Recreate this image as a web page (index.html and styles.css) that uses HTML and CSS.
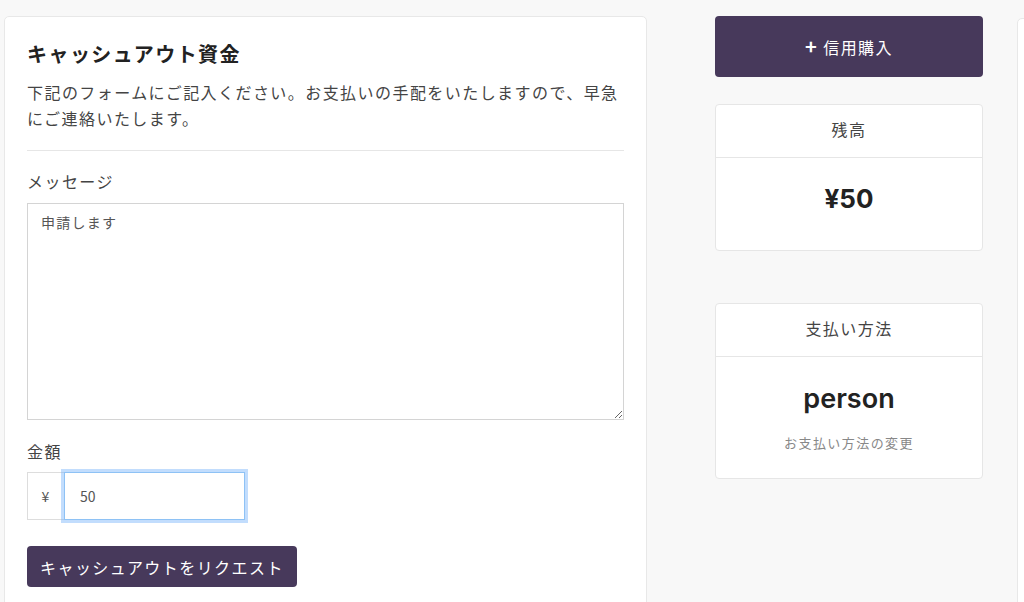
FILE: index.html
```html
<!DOCTYPE html>
<html lang="ja">
<head>
<meta charset="UTF-8">
<meta name="viewport" content="width=device-width, initial-scale=1.0">
<title>キャッシュアウト資金</title>
<link rel="stylesheet" href="styles.css">
</head>
<body>

<div class="page">
  <div class="main-card">
    <h2 class="title">キャッシュアウト資金</h2>
    <p class="lead">下記のフォームにご記入ください。お支払いの手配をいたしますので、早急にご連絡いたします。</p>
    <hr class="divider">

    <label class="label" for="message">メッセージ</label>
    <textarea id="message" class="textarea">申請します</textarea>

    <label class="label amount-label" for="amount">金額</label>
    <div class="input-group">
      <span class="addon">¥</span>
      <input id="amount" class="amount-input" type="text" value="50">
    </div>

    <button class="btn-request">キャッシュアウトをリクエスト</button>
  </div>

  <div class="side">
    <button class="btn-credit"><span class="plus">+</span> 信用購入</button>

    <div class="info-card">
      <div class="info-head">残高</div>
      <div class="info-body balance">
        <div class="big">¥50</div>
      </div>
    </div>

    <div class="info-card method-card">
      <div class="info-head">支払い方法</div>
      <div class="info-body method">
        <div class="big person">person</div>
        <a class="change-link">お支払い方法の変更</a>
      </div>
    </div>
  </div>

  <div class="edge-card"></div>
</div>

</body>
</html>
```

FILE: styles.css
```css
* {
  box-sizing: border-box;
}
body {
  margin: 0;
  padding: 0;
  background-color: #f8f8f8;
  font-family: "Noto Sans CJK JP", "Noto Sans", sans-serif;
  letter-spacing: 0.09em;
  color: #444;
  overflow: hidden;
}
.page {
  display: flex;
  align-items: flex-start;
  padding: 16px 0 0 4px;
  height: 602px;
  overflow: hidden;
}
.main-card {
  flex-shrink: 0;
  width: 643px;
  min-height: 620px;
  background-color: #fff;
  border: 1px solid #e8e8e8;
  border-radius: 5px;
  padding: 21px 22px 0 22px;
  display: flex;
  flex-direction: column;
  align-items: flex-start;
}
.title {
  margin: 0;
  font-size: 20px;
  line-height: 32px;
  font-weight: 700;
  color: #222;
}
.lead {
  margin: 9px 0 0 0;
  font-size: 16px;
  line-height: 26px;
  color: #444;
}
.divider {
  width: 100%;
  margin: 19px 0 0 0;
  border: none;
  border-top: 1px solid #e6e6e6;
}
.label {
  margin-top: 17px;
  font-size: 16px;
  line-height: 26px;
  color: #444;
}
.textarea {
  margin-top: 9px;
  width: 100%;
  height: 217px;
  border: 1px solid #d4d4d4;
  border-radius: 0;
  padding: 8px 13px;
  font-family: "Noto Sans CJK JP", "Noto Sans", sans-serif;
  letter-spacing: 0.09em;
  font-size: 14px;
  line-height: 20px;
  color: #555;
  resize: vertical;
  outline: none;
}
.amount-label {
  margin-top: 18px;
}
.input-group {
  margin-top: 8px;
  display: flex;
  height: 48px;
}
.addon {
  width: 37px;
  display: flex;
  align-items: center;
  justify-content: center;
  border: 1px solid #ddd;
  border-right: none;
  font-size: 14px;
  color: #555;
  background-color: #fff;
}
.amount-input {
  width: 181px;
  height: 48px;
  border: 1px solid #8ec2f5;
  box-shadow: 0 0 0 3px rgba(120, 180, 250, 0.45);
  padding: 0 15px;
  font-family: "Noto Sans CJK JP", "Noto Sans", sans-serif;
  font-size: 14px;
  color: #555;
  outline: none;
}
.btn-request {
  margin-top: 26px;
  height: 41px;
  padding: 0 13px;
  background-color: #47395b;
  border: none;
  border-radius: 4px;
  color: #fff;
  font-family: "Noto Sans CJK JP", "Noto Sans", sans-serif;
  letter-spacing: 0.09em;
  font-size: 16px;
  cursor: pointer;
}
.side {
  flex-shrink: 0;
  width: 268px;
  margin-left: 68px;
  display: flex;
  flex-direction: column;
}
.btn-credit {
  height: 61px;
  background-color: #47395b;
  border: none;
  border-radius: 4px;
  color: #fff;
  font-family: "Noto Sans CJK JP", "Noto Sans", sans-serif;
  letter-spacing: 0.09em;
  font-size: 16px;
  cursor: pointer;
}
.plus {
  font-size: 20px;
  font-weight: 700;
  line-height: 16px;
}
.info-card {
  margin-top: 27px;
  background-color: #fff;
  border: 1px solid #e6e6e6;
  border-radius: 4px;
  text-align: center;
}
.method-card {
  margin-top: 52px;
}
.info-head {
  height: 53px;
  line-height: 48px;
  border-bottom: 1px solid #e6e6e6;
  font-size: 16px;
  color: #444;
}
.info-body {
  display: flex;
  flex-direction: column;
  align-items: center;
}
.balance {
  height: 92px;
  padding-top: 24px;
}
.method {
  height: 121px;
  padding-top: 24px;
}
.big {
  font-family: "Inter", "Noto Sans", sans-serif;
  letter-spacing: 0;
  font-weight: 700;
  font-size: 26px;
  line-height: 34px;
  color: #222;
}
.person {
  font-size: 27px;
  line-height: 36px;
  font-weight: 600;
}
.change-link {
  margin-top: 16px;
  font-size: 13px;
  color: #888;
  cursor: pointer;
}
.edge-card {
  flex-shrink: 0;
  margin-left: 34px;
  margin-top: 2px;
  width: 40px;
  height: 620px;
  background-color: #fff;
  border: 1px solid #e8e8e8;
  border-radius: 5px;
}
```
